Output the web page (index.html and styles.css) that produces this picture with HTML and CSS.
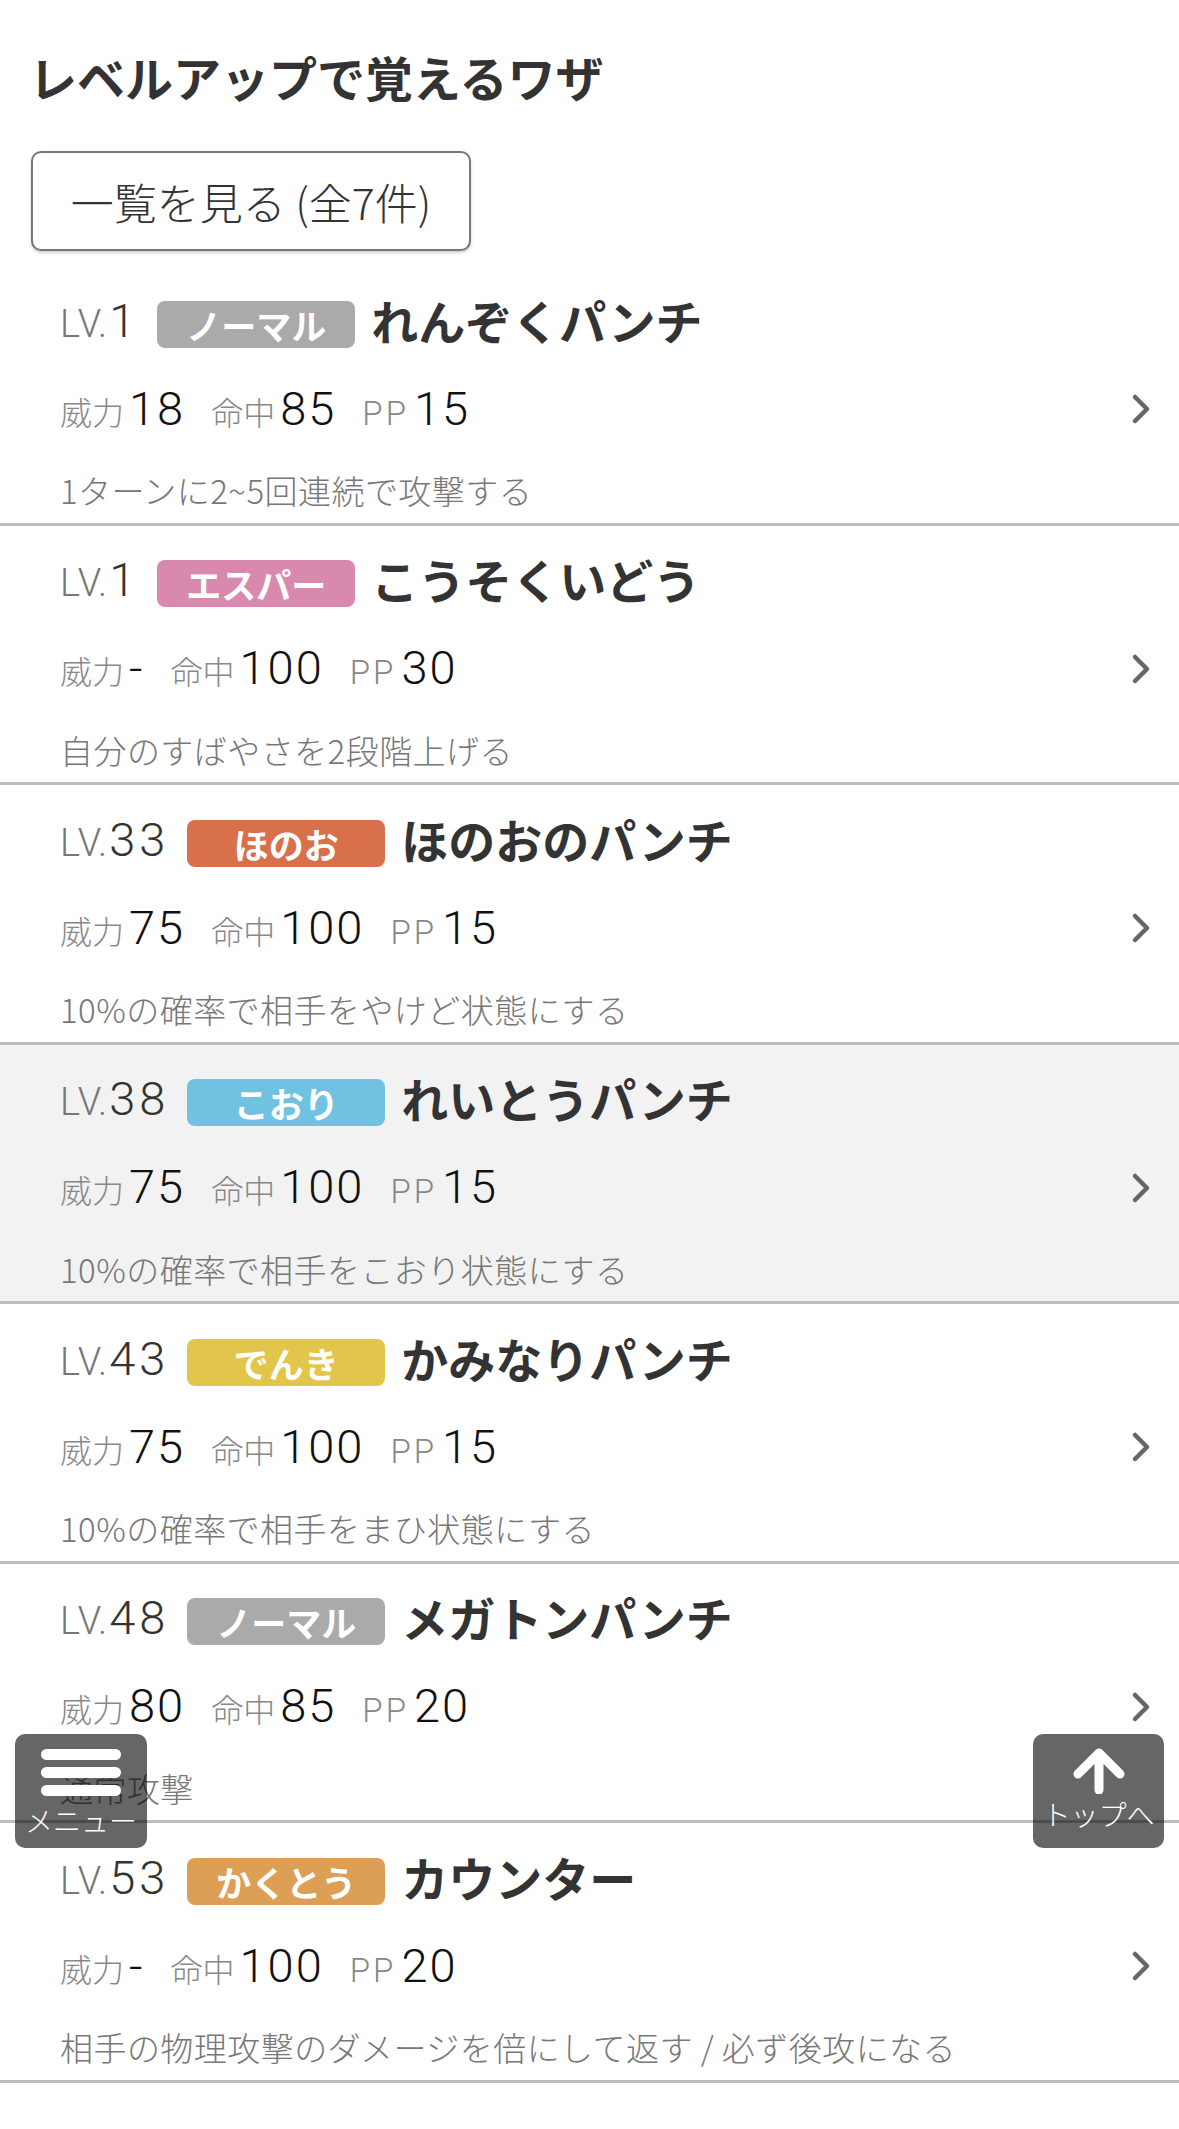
FILE: index.html
```html
<!DOCTYPE html>
<html lang="ja">
<head>
<meta charset="utf-8">
<title>レベルアップで覚えるワザ</title>
<link rel="stylesheet" href="styles.css">
</head>
<body>
<div class="page">
  <h1 class="title">レベルアップで覚えるワザ</h1>
  <div class="btn-wrap"><button class="list-btn">一覧を見る (全7件)</button></div>

  <ul class="moves">
    <li class="move">
      <div class="head"><span class="lv"><span class="lv-l">LV.</span><span class="lv-n">1</span></span><span class="type t-normal">ノーマル</span><span class="name">れんぞくパンチ</span></div>
      <div class="stats"><div class="sg"><span class="lbl">威力</span><span class="num">18</span><span class="lbl">命中</span><span class="num">85</span><span class="lbl pp">PP</span><span class="num">15</span></div><svg class="chev" viewBox="0 0 22 32" width="22" height="32"><path d="M5 4 L17 16 L5 28"/></svg></div>
      <div class="desc">1ターンに2~5回連続で攻撃する</div>
    </li>
    <li class="move">
      <div class="head"><span class="lv"><span class="lv-l">LV.</span><span class="lv-n">1</span></span><span class="type t-psychic">エスパー</span><span class="name">こうそくいどう</span></div>
      <div class="stats"><div class="sg"><span class="lbl">威力</span><span class="num">-</span><span class="lbl">命中</span><span class="num">100</span><span class="lbl pp">PP</span><span class="num">30</span></div><svg class="chev" viewBox="0 0 22 32" width="22" height="32"><path d="M5 4 L17 16 L5 28"/></svg></div>
      <div class="desc">自分のすばやさを2段階上げる</div>
    </li>
    <li class="move">
      <div class="head"><span class="lv"><span class="lv-l">LV.</span><span class="lv-n">33</span></span><span class="type t-fire">ほのお</span><span class="name">ほのおのパンチ</span></div>
      <div class="stats"><div class="sg"><span class="lbl">威力</span><span class="num">75</span><span class="lbl">命中</span><span class="num">100</span><span class="lbl pp">PP</span><span class="num">15</span></div><svg class="chev" viewBox="0 0 22 32" width="22" height="32"><path d="M5 4 L17 16 L5 28"/></svg></div>
      <div class="desc">10%の確率で相手をやけど状態にする</div>
    </li>
    <li class="move active">
      <div class="head"><span class="lv"><span class="lv-l">LV.</span><span class="lv-n">38</span></span><span class="type t-ice">こおり</span><span class="name">れいとうパンチ</span></div>
      <div class="stats"><div class="sg"><span class="lbl">威力</span><span class="num">75</span><span class="lbl">命中</span><span class="num">100</span><span class="lbl pp">PP</span><span class="num">15</span></div><svg class="chev" viewBox="0 0 22 32" width="22" height="32"><path d="M5 4 L17 16 L5 28"/></svg></div>
      <div class="desc">10%の確率で相手をこおり状態にする</div>
    </li>
    <li class="move">
      <div class="head"><span class="lv"><span class="lv-l">LV.</span><span class="lv-n">43</span></span><span class="type t-electric">でんき</span><span class="name">かみなりパンチ</span></div>
      <div class="stats"><div class="sg"><span class="lbl">威力</span><span class="num">75</span><span class="lbl">命中</span><span class="num">100</span><span class="lbl pp">PP</span><span class="num">15</span></div><svg class="chev" viewBox="0 0 22 32" width="22" height="32"><path d="M5 4 L17 16 L5 28"/></svg></div>
      <div class="desc">10%の確率で相手をまひ状態にする</div>
    </li>
    <li class="move">
      <div class="head"><span class="lv"><span class="lv-l">LV.</span><span class="lv-n">48</span></span><span class="type t-normal">ノーマル</span><span class="name">メガトンパンチ</span></div>
      <div class="stats"><div class="sg"><span class="lbl">威力</span><span class="num">80</span><span class="lbl">命中</span><span class="num">85</span><span class="lbl pp">PP</span><span class="num">20</span></div><svg class="chev" viewBox="0 0 22 32" width="22" height="32"><path d="M5 4 L17 16 L5 28"/></svg></div>
      <div class="desc">通常攻撃</div>
    </li>
    <li class="move">
      <div class="head"><span class="lv"><span class="lv-l">LV.</span><span class="lv-n">53</span></span><span class="type t-fighting">かくとう</span><span class="name">カウンター</span></div>
      <div class="stats"><div class="sg"><span class="lbl">威力</span><span class="num">-</span><span class="lbl">命中</span><span class="num">100</span><span class="lbl pp">PP</span><span class="num">20</span></div><svg class="chev" viewBox="0 0 22 32" width="22" height="32"><path d="M5 4 L17 16 L5 28"/></svg></div>
      <div class="desc">相手の物理攻撃のダメージを倍にして返す / 必ず後攻になる</div>
    </li>
  </ul>

  <a class="float-btn menu-btn">
    <span class="burger"><span></span><span></span><span></span></span>
    <span class="fb-label">メニュー</span>
  </a>
  <a class="float-btn top-btn">
    <svg class="arrow" viewBox="0 0 60 46" width="60" height="46"><path d="M30 42 V6 M9 26 L30 5 L51 26"/></svg>
    <span class="fb-label">トップへ</span>
  </a>
</div>
</body>
</html>
```

FILE: styles.css
```css
* { box-sizing: border-box; }
html, body {
  margin: 0;
  padding: 0;
  background: #fff;
}
body {
  font-family: "Noto Sans CJK JP", "Noto Sans", sans-serif;
  color: #333;
}
.page {
  position: relative;
  width: 1179px;
  min-height: 2129px;
}
.title {
  margin: 0;
  padding: 52px 0 0 29px;
  font-size: 48px;
  line-height: 48px;
  font-weight: 700;
  color: #333;
}
.btn-wrap {
  padding: 51px 0 0 31px;
}
.list-btn {
  display: block;
  width: 440px;
  height: 100px;
  border: 2px solid #777;
  border-radius: 10px;
  background: #fff;
  box-shadow: 0 2px 3px rgba(0,0,0,0.18);
  font-family: "Noto Sans CJK JP", sans-serif;
  font-size: 43px;
  font-weight: 300;
  color: #333;
  padding: 0;
  line-height: 1;
}
.moves {
  list-style: none;
  margin: 15px 0 0;
  padding: 0;
}
.move {
  padding: 34px 27px 10.5px 60px;
  border-bottom: 3px solid #bdbdbd;
  background: #fff;
}
.move.active { background: #f2f2f2; }
.head {
  display: flex;
  align-items: center;
  height: 48px;
}
.lv {
  display: flex;
  align-items: baseline;
  font-family: Roboto, "Liberation Sans", sans-serif;
  font-weight: 300;
  line-height: 1;
  margin-bottom: 8px;
}
.lv-l {
  font-size: 38px;
  letter-spacing: 1px;
  color: #777;
}
.lv-n {
  font-size: 47px;
  letter-spacing: 4px;
  color: #333;
  margin-left: 1px;
}
.type {
  display: flex;
  align-items: center;
  justify-content: center;
  width: 198px;
  height: 47px;
  margin-left: 18px;
  border-radius: 8px;
  color: #fff;
  font-size: 35px;
  font-weight: 700;
  line-height: 1;
}
.t-normal { background: #aaaaaa; }
.t-psychic { background: #d889ad; }
.t-fire { background: #d8704c; }
.t-ice { background: #71c1e1; }
.t-electric { background: #e2c64b; }
.t-fighting { background: #dd9f55; }
.name {
  margin-left: 16px;
  margin-bottom: 10px;
  font-size: 47px;
  font-weight: 700;
  color: #333;
  line-height: 1;
}
.stats {
  display: flex;
  align-items: center;
  justify-content: space-between;
  height: 60px;
  margin-top: 30px;
}
.sg {
  display: flex;
  align-items: baseline;
  line-height: 1;
}
.lbl {
  font-size: 32px;
  font-weight: 300;
  color: #888;
}
.lbl.pp {
  font-family: Roboto, "Liberation Sans", sans-serif;
  font-weight: 300;
  font-size: 33px;
  letter-spacing: 3px;
}
.num {
  font-family: Roboto, "Liberation Sans", sans-serif;
  font-weight: 300;
  font-size: 47px;
  letter-spacing: 2px;
  color: #111;
  margin-left: 5px;
  margin-right: 26px;
}
.chev {
  display: block;
  margin-top: 2px;
}
.chev path {
  fill: none;
  stroke: #666;
  stroke-width: 4.5;
  stroke-linecap: round;
  stroke-linejoin: round;
}
.desc {
  margin-top: 30px;
  height: 44px;
  line-height: 44px;
  font-size: 33px;
  font-weight: 300;
  letter-spacing: 0.45px;
  color: #777;
  white-space: nowrap;
}
.float-btn {
  position: absolute;
  top: 1734px;
  width: 132px;
  height: 114px;
  border-radius: 10px;
  background: rgba(0,0,0,0.6);
  display: flex;
  flex-direction: column;
  align-items: center;
  color: #fff;
}
.menu-btn { left: 15px; padding-top: 15px; }
.top-btn { left: 1033px; width: 131px; padding-top: 15px; }
.burger {
  display: flex;
  flex-direction: column;
  gap: 7px;
}
.burger span {
  display: block;
  width: 80px;
  height: 11px;
  border-radius: 6px;
  background: #fff;
}
.fb-label {
  font-size: 28px;
  font-weight: 300;
  line-height: 28px;
  margin-top: 10px;
  white-space: nowrap;
}
.arrow { display: block; margin-top: -1px; }
.arrow path {
  fill: none;
  stroke: #fff;
  stroke-width: 9;
  stroke-linecap: round;
  stroke-linejoin: round;
}
.top-btn .fb-label { margin-top: 6px; }
```
